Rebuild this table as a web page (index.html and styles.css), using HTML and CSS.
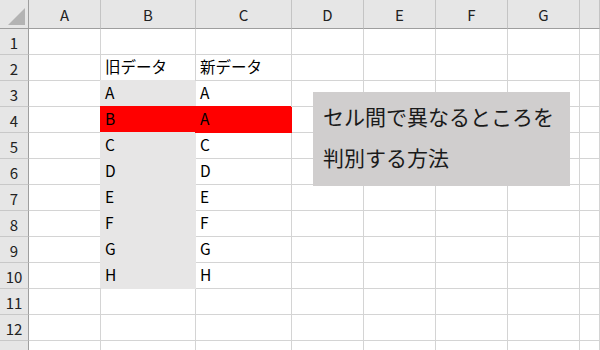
FILE: index.html
```html
<!DOCTYPE html>
<html lang="ja">
<head>
<meta charset="utf-8">
<title>セル間で異なるところを判別する方法</title>
<link rel="stylesheet" href="styles.css">
</head>
<body>
<div class="sheet">
  <div class="row head">
    <div class="rh corner"><svg width="28" height="28" viewBox="0 0 28 28"><polygon points="25,8 25,25 8,25" fill="#b3b3b3"/></svg></div>
    <div class="ch w-a">A</div>
    <div class="ch w-b">B</div>
    <div class="ch w-c">C</div>
    <div class="ch w-d">D</div>
    <div class="ch w-d">E</div>
    <div class="ch w-d">F</div>
    <div class="ch w-d">G</div>
    <div class="ch w-h"></div>
  </div>
  <div class="row"><div class="rh">1</div><div class="cell w-a"></div><div class="cell w-b"></div><div class="cell w-c"></div><div class="cell w-d"></div><div class="cell w-d"></div><div class="cell w-d"></div><div class="cell w-d"></div><div class="cell w-h"></div></div>
  <div class="row"><div class="rh">2</div><div class="cell w-a"></div><div class="cell w-b">旧データ</div><div class="cell w-c">新データ</div><div class="cell w-d"></div><div class="cell w-d"></div><div class="cell w-d"></div><div class="cell w-d"></div><div class="cell w-h"></div></div>
  <div class="row"><div class="rh">3</div><div class="cell w-a"></div><div class="cell w-b gray">A</div><div class="cell w-c">A</div><div class="cell w-d"></div><div class="cell w-d"></div><div class="cell w-d"></div><div class="cell w-d"></div><div class="cell w-h"></div></div>
  <div class="row"><div class="rh">4</div><div class="cell w-a"></div><div class="cell w-b red">B</div><div class="cell w-c red">A</div><div class="cell w-d"></div><div class="cell w-d"></div><div class="cell w-d"></div><div class="cell w-d"></div><div class="cell w-h"></div></div>
  <div class="row"><div class="rh">5</div><div class="cell w-a"></div><div class="cell w-b gray">C</div><div class="cell w-c">C</div><div class="cell w-d"></div><div class="cell w-d"></div><div class="cell w-d"></div><div class="cell w-d"></div><div class="cell w-h"></div></div>
  <div class="row"><div class="rh">6</div><div class="cell w-a"></div><div class="cell w-b gray">D</div><div class="cell w-c">D</div><div class="cell w-d"></div><div class="cell w-d"></div><div class="cell w-d"></div><div class="cell w-d"></div><div class="cell w-h"></div></div>
  <div class="row"><div class="rh">7</div><div class="cell w-a"></div><div class="cell w-b gray">E</div><div class="cell w-c">E</div><div class="cell w-d"></div><div class="cell w-d"></div><div class="cell w-d"></div><div class="cell w-d"></div><div class="cell w-h"></div></div>
  <div class="row"><div class="rh">8</div><div class="cell w-a"></div><div class="cell w-b gray">F</div><div class="cell w-c">F</div><div class="cell w-d"></div><div class="cell w-d"></div><div class="cell w-d"></div><div class="cell w-d"></div><div class="cell w-h"></div></div>
  <div class="row"><div class="rh">9</div><div class="cell w-a"></div><div class="cell w-b gray">G</div><div class="cell w-c">G</div><div class="cell w-d"></div><div class="cell w-d"></div><div class="cell w-d"></div><div class="cell w-d"></div><div class="cell w-h"></div></div>
  <div class="row"><div class="rh">10</div><div class="cell w-a"></div><div class="cell w-b gray">H</div><div class="cell w-c">H</div><div class="cell w-d"></div><div class="cell w-d"></div><div class="cell w-d"></div><div class="cell w-d"></div><div class="cell w-h"></div></div>
  <div class="row"><div class="rh">11</div><div class="cell w-a"></div><div class="cell w-b"></div><div class="cell w-c"></div><div class="cell w-d"></div><div class="cell w-d"></div><div class="cell w-d"></div><div class="cell w-d"></div><div class="cell w-h"></div></div>
  <div class="row"><div class="rh">12</div><div class="cell w-a"></div><div class="cell w-b"></div><div class="cell w-c"></div><div class="cell w-d"></div><div class="cell w-d"></div><div class="cell w-d"></div><div class="cell w-d"></div><div class="cell w-h"></div></div>
  <div class="row"><div class="rh">13</div><div class="cell w-a"></div><div class="cell w-b"></div><div class="cell w-c"></div><div class="cell w-d"></div><div class="cell w-d"></div><div class="cell w-d"></div><div class="cell w-d"></div><div class="cell w-h"></div></div>

  <div class="note">
    <p>セル間で異なるところを</p>
    <p>判別する方法</p>
  </div>
</div>
</body>
</html>
```

FILE: styles.css
```css
html, body {
  margin: 0;
  padding: 0;
  background: #fff;
}

body {
  width: 600px;
  height: 350px;
  overflow: hidden;
  font-family: "Noto Sans CJK JP", "Noto Sans", sans-serif;
  color: #000;
}

.sheet {
  position: relative;
  width: 600px;
  height: 350px;
  overflow: hidden;
}

.row {
  display: flex;
  height: 26px;
}

.row.head {
  height: 29px;
}

/* column widths include the 1px gridline on the right */
.w-a { width: 72px; }
.w-b { width: 95px; }
.w-c { width: 96px; }
.w-d { width: 72px; }
.w-h { flex: 1; }

/* row header */
.rh {
  box-sizing: border-box;
  width: 29px;
  flex: none;
  background: #e6e6e6;
  border-right: 1px solid #9e9e9e;
  border-bottom: 1px solid #c8c8c8;
  display: flex;
  align-items: center;
  justify-content: center;
  font-size: 15px;
  color: #222;
  padding-top: 1px;
}

.head .rh {
  border-bottom: 1px solid #9e9e9e;
  padding: 0;
}

.corner svg {
  display: block;
}

/* column header */
.ch {
  box-sizing: border-box;
  flex: none;
  background: #e6e6e6;
  border-right: 1px solid #c4c4c4;
  border-bottom: 1px solid #9e9e9e;
  display: flex;
  align-items: center;
  justify-content: center;
  font-size: 15px;
  color: #222;
}

.ch.w-h { flex: 1; }

/* worksheet cell */
.cell {
  box-sizing: border-box;
  flex: none;
  border-right: 1px solid #d4d4d4;
  border-bottom: 1px solid #d4d4d4;
  display: flex;
  align-items: flex-end;
  padding: 0 0 3px 4px;
  font-size: 15.5px;
  line-height: 22px;
  white-space: nowrap;
}

.cell.w-h { flex: 1; }

/* filled cells hide their gridlines */
.cell.gray {
  background: #e7e6e6;
  border-color: #e7e6e6;
  box-shadow: -1px -1px 0 0 #e7e6e6;
}

.cell.red {
  background: #ff0000;
  border-color: #ff0000;
  box-shadow: -1px -1px 0 0 #ff0000;
}

/* floating text box */
.note {
  position: absolute;
  left: 313px;
  top: 92px;
  width: 257px;
  height: 94px;
  box-sizing: border-box;
  background: #d0cece;
  padding: 4px 0 0 10px;
  font-size: 21px;
  line-height: 41px;
  color: #1a1a1a;
}

.note p {
  margin: 0;
  white-space: nowrap;
}
```
